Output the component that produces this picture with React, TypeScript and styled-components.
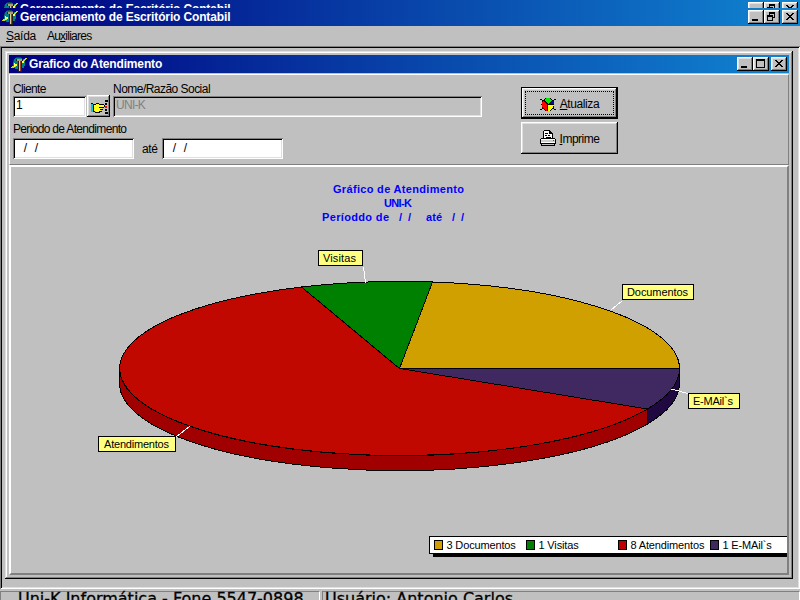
import React from "react";
import styled, { createGlobalStyle, css } from "styled-components";

const Global = createGlobalStyle`
  * { box-sizing: border-box; }
  body { margin: 0; background: #c0c0c0; font: 11px/13px "Liberation Sans", Arial, sans-serif; color: #000; }
  svg { display: block; flex: none; }
`;

const raised = css`
  box-shadow: inset -1px -1px #000, inset 1px 1px #fff, inset -2px -2px #808080, inset 2px 2px #dfdfdf;
`;

const Screen = styled.div`
  width: 800px;
  height: 600px;
  overflow: hidden;
  display: flex;
  flex-direction: column;
  background: #c0c0c0;
`;

const Clip = styled.div`
  height: 8px;
  flex: none;
  overflow: hidden;
`;

const TitleBar = styled.div`
  height: 18px;
  flex: none;
  display: flex;
  align-items: center;
  padding: 0 2px;
  background: linear-gradient(90deg, #000080, #1084d0);
`;

const TitleText = styled.span<{ $spacing: number }>`
  flex: 1;
  padding-left: 2px;
  color: #fff;
  font-size: 12px;
  font-weight: bold;
  letter-spacing: ${(p) => p.$spacing}px;
  white-space: nowrap;
`;

const Caption = styled.span<{ $gap?: boolean }>`
  ${raised}
  width: 16px;
  height: 14px;
  background: #c0c0c0;
  margin-left: ${(p) => (p.$gap ? 2 : 0)}px;
`;

const MenuBar = styled.div`
  height: 20px;
  flex: none;
  display: flex;
  gap: 11px;
  padding: 4px 6px;
  font-size: 12px;
`;

const Text = styled.span<{ $spacing?: number }>`
  letter-spacing: ${(p) => p.$spacing ?? 0}px;
  white-space: pre;
`;

const Mdi = styled.div`
  height: 543px;
  flex: none;
  padding: 5px 7px 10px 5px;
  box-shadow: inset 1px 1px #808080, inset -1px -1px #fff, inset 2px 2px #000, inset -2px -2px #dfdfdf;
`;

const Child = styled.div`
  height: 528px;
  padding: 4px;
  display: flex;
  flex-direction: column;
  box-shadow: inset -1px -1px #000, inset 1px 1px #dfdfdf, inset -2px -2px #808080, inset 2px 2px #fff;
`;

const FormPanel = styled.div`
  height: 91px;
  margin-top: 1px;
  flex: none;
  display: flex;
  border: 1px solid;
  border-color: #fff #808080 #808080 #fff;
`;

const Fields = styled.div`
  width: 511px;
  padding: 8px 0 0 3px;
  font-size: 12px;
`;

const FieldLabels = styled.div`
  display: grid;
  grid-template-columns: 100px 1fr;
  height: 13px;
`;

const FieldRow = styled.div<{ $top?: number }>`
  display: flex;
  align-items: flex-start;
  height: 22px;
  margin-bottom: 5px;
  padding-top: ${(p) => p.$top ?? 0}px;
`;

const Field = styled.div<{ $w: number; $disabled?: boolean; $date?: boolean }>`
  width: ${(p) => p.$w}px;
  height: 21px;
  padding: ${(p) => (p.$date ? 4 : 3)}px 3px 0;
  word-spacing: ${(p) => (p.$date ? 0.5 : 0)}px;
  white-space: pre;
  background: ${(p) => (p.$disabled ? "#c0c0c0" : "#fff")};
  color: ${(p) => (p.$disabled ? "#808080" : "#000")};
  box-shadow: inset 1px 1px #808080, inset -1px -1px #fff, inset 2px 2px #000, inset -2px -2px #dfdfdf;
`;

const PickButton = styled.button`
  ${raised}
  width: 23px;
  height: 22px;
  margin: -1px 3px 0 1px;
  padding: 2px 0 0 4px;
  border: 0;
  background: #c0c0c0;
`;

const Until = styled.span`
  width: 28px;
  padding: 5px 0 0 8px;
  letter-spacing: -0.4px;
`;

const Actions = styled.div`
  display: flex;
  flex-direction: column;
  gap: 3px;
  padding-top: 12px;
`;

const Action = styled.button<{ $focused?: boolean }>`
  position: relative;
  display: flex;
  align-items: center;
  justify-content: center;
  gap: 3px;
  width: 97px;
  height: 32px;
  padding: 2px 0 0;
  border: 0;
  color: #000;
  background: #c0c0c0;
  font: 12px/13px "Liberation Sans", Arial, sans-serif;
  ${raised}
  ${(p) =>
    p.$focused &&
    css`
      border: 1px solid #000;
      &::after {
        content: "";
        position: absolute;
        inset: 3px;
        border: 1px dotted #000;
      }
    `}
`;

const ChartPanel = styled.div`
  position: relative;
  height: 410px;
  flex: none;
  overflow: hidden;
  border: 2px solid;
  border-color: #fff #808080 #808080 #fff;
`;

const Legend = styled.div`
  position: absolute;
  left: 418px;
  top: 369px;
  width: 368px;
  height: 18px;
  padding: 3px 4px;
  display: grid;
  grid-template-columns: repeat(4, 92px);
  border: 1px solid #000;
  background: #fff;
  box-shadow: 4px 3px #000;
`;

const LegendItem = styled.div`
  display: flex;
  align-items: flex-start;
  gap: 3.5px;
  line-height: 11px;
  letter-spacing: -0.15px;
  white-space: pre;
`;

const Swatch = styled.i<{ $c: string }>`
  width: 9px;
  height: 10px;
  border: 1px solid #000;
  background: ${(p) => p.$c};
`;

const Status = styled.div`
  flex: none;
  height: 30px;
  padding-top: 2px;
  display: grid;
  grid-template-columns: 320px 1fr;
  gap: 2px;
`;

const StatusCell = styled.div<{ $pad: number }>`
  padding: 0 0 0 ${(p) => p.$pad}px;
  border: 1px solid;
  border-color: #808080 #fff #fff #808080;
  font: 16px/14px "DejaVu Sans", Verdana, sans-serif;
  white-space: nowrap;
  -webkit-text-stroke: 0.3px #000;
`;

const AppIcon = () => (
  <svg width="16" height="18" viewBox="0 0 16 18" shapeRendering="crispEdges">
    <path d="M4 3h7v1h2v2h1v5h-1v2h-2v1H4v-1H3v-2H2V6h1V4h1z" fill="#008080" />
    <path d="M5 2h5v1H5zM2 5h1v2H2z" fill="#004848" />
    <path d="M14 3h2v1h-1v1h-1v1h-2V5h1V4h1zM0 12h1v-1h2v-1h2v2H3v1H0z" fill="#c8d820" />
    <path d="M3 8h1v1h2v2H4v1H3z" fill="#ffff40" />
    <path d="M5 4h7v2h-1v11H7V6H5z" fill="#202020" />
    <path d="M6 4h5v2H6z" fill="#b09878" />
    <path d="M8 6h1v10H8z" fill="#e8c898" />
    <path d="M9 6h1v10H9z" fill="#984020" />
    <path d="M11 6h2v2h-2z" fill="#ffff40" />
  </svg>
);

const Glyph = ({ kind }: { kind: "min" | "max" | "restore" | "close" }) => (
  <svg width="16" height="14" viewBox="0 0 16 14" shapeRendering="crispEdges">
    {kind === "min" && <path d="M4 9h6v2H4z" />}
    {kind === "max" && <path fillRule="evenodd" d="M3 2h9v9H3zM4 4v6h7V4z" />}
    {kind === "restore" && (
      <path fillRule="evenodd" d="M5 2h6v6H9V7h1V4H6v1H5zM3 5h6v6H3zM4 7v3h4V7z" />
    )}
    {kind === "close" && (
      <path d="M4 3h2v1h1v1h2V4h1V3h2v1h-1v1h-1v1H9v1h1v1h1v1h1v1h-2V9H9V8H7v1H6v1H4V9h1V8h1V7h1V6H6V5H5V4H4z" />
    )}
  </svg>
);

const Bar = ({ text, middle, spacing }: { text: string; middle: "max" | "restore"; spacing: number }) => (
  <TitleBar>
    <AppIcon />
    <TitleText $spacing={spacing}>{text}</TitleText>
    <Caption><Glyph kind="min" /></Caption>
    <Caption><Glyph kind={middle} /></Caption>
    <Caption $gap><Glyph kind="close" /></Caption>
  </TitleBar>
);

const HandIcon = () => (
  <svg width="17" height="14" viewBox="0 0 17 14" shapeRendering="crispEdges">
    <path d="M0 4h2v8H0z" fill="#00c8d8" />
    <path d="M0 3h2v1H0zM2 4h1v8H2z" />
    <path d="M3 5h2V4h4v1h4v2h-2v3h-1v1H9v1H5v-1H3z" fill="#ffff20" />
    <path d="M5 3h3v1H5zM8 4h1v1H8zM9 4h4v1H9zM13 5h1v2h-1zM8 7h5v1H8zM9 9h3v1H9zM8 11h3v1H8zM4 12h5v1H4zM3 4h2v1H3zM3 11h1v1H3z" />
    <path d="M14 0h3v2h-3zM14 3h2v2h-2zM14 9h2v2h-2zM14 12h3v2h-3z" />
    <path d="M14 6h2v2h-2z" fill="#f00" />
  </svg>
);

const PieIcon = () => (
  <svg width="17" height="15" viewBox="0 0 17 15" shapeRendering="crispEdges">
    <circle cx="8" cy="7.5" r="6.5" fill="#000" />
    <path d="M8 7L4 3Q8-1 12 3z" fill="#00e800" />
    <path d="M7 7L3 4Q0 8 3 11L7 14z" fill="#f00" />
    <path d="M9 7l4-4q2 2 1 4z" fill="#0000e0" />
    <path d="M8 8h6q-1 5-6 6z" fill="#ff0" />
    <path d="M0 2h2v1H0zM2 3h1v1H2zM14 2h2v1h-2zM13 3h1v1h-1zM0 12h2v1H0zM2 11h1v1H2zM13 11h1v1h-1zM14 12h2v1h-2z" />
  </svg>
);

const PrinterIcon = () => (
  <svg width="17" height="18" viewBox="0 0 17 18" shapeRendering="crispEdges">
    <path d="M4 0h6v1h1v1h1v1h1v6H3V1h1z" />
    <path d="M4 1h5v3h3v4H4z" fill="#fff" />
    <path d="M5 3h3v1H5zM5 5h2v1H5zM8 5h2v1H8zM6 7h5v1H6zM1 8h14v1h1v5h-1v2H1v-2H0V9h1z" />
    <path d="M1 9h14v1H1zM1 12h14v1H1z" fill="#fff" />
    <path d="M1 10h14v2H1z" fill="#c8d0c8" />
    <path d="M2 14h12v1H2z" fill="#c0c0c0" />
    <path d="M13 10h1v1h-1z" fill="#f00" />
  </svg>
);

const marks = [
  { x: 318, y: 250, w: 45, text: "Visitas", tx: 323, tw: 33 },
  { x: 622, y: 284, w: 72, text: "Documentos", tx: 627, tw: 61 },
  { x: 688, y: 393, w: 52, text: "E-MAil`s", tx: 693, tw: 40 },
  { x: 98, y: 436, w: 78, text: "Atendimentos", tx: 104, tw: 65 },
];

const titles = [
  { text: "Gráfico de Atendimento", x: 333, y: 193, w: 131 },
  { text: "UNI-K", x: 384, y: 207, w: 28 },
  { text: "Períoddo de", x: 322, y: 221, w: 67 },
  { text: "/ /", x: 399, y: 221, w: 12 },
  { text: "até", x: 426, y: 221, w: 16 },
  { text: "/ /", x: 452, y: 221, w: 12 },
];

const Pie = () => (
  <svg width="776" height="406" viewBox="11 167 776 406">
    <g stroke="#000" strokeWidth="1" strokeLinejoin="round" shapeRendering="crispEdges">
      <path d="M119.500 368.500A280 87 0 0 0 647.500 409V424A280 87 0 0 1 119.500 384.500z" fill="#a00000" />
      <path d="M679.500 368.500V384.500A280 87 0 0 1 647.500 424V409A280 87 0 0 0 679.500 368.500z" fill="#200840" />
      <path d="M399.500 368.500H679.500A280 87 0 0 0 432.500 282z" fill="#d0a000" />
      <path d="M399.500 368.500L432.500 282A280 87 0 0 0 301.500 287z" fill="#008000" />
      <path d="M399.500 368.500L301.500 287A280 87 0 1 0 647.500 409z" fill="#c00800" />
      <path d="M399.500 368.500L647.500 409A280 87 0 0 0 679.500 368.500z" fill="#402860" />
    </g>
    <path d="M363.500 267L365.500 283M622 301L611 310M688 393.500L671 389M176 437L190 426" stroke="#fff" fill="none" shapeRendering="crispEdges" />
    {marks.map((m) => (
      <g key={m.text}>
        <rect x={m.x + 0.5} y={m.y + 0.5} width={m.w - 1} height="15" fill="#ffff80" stroke="#000" />
        <text x={m.tx} y={m.y + 12} textLength={m.tw} fontSize="11">{m.text}</text>
      </g>
    ))}
    {titles.map((t) => (
      <text key={`${t.x}-${t.y}`} x={t.x} y={t.y} textLength={t.w} fontSize="11" fontWeight="bold" fill="#00f">{t.text}</text>
    ))}
  </svg>
);

const legend = [
  ["#d0a000", "3 Documentos"],
  ["#008000", "1 Visitas"],
  ["#c00000", "8 Atendimentos"],
  ["#402860", "1 E-MAil`s"],
];

export default function App() {
  return (
    <Screen>
      <Global />
      <Clip><Bar text="Gerenciamento de Escritório Contabil" middle="restore" spacing={-0.14} /></Clip>
      <Bar text="Gerenciamento de Escritório Contabil" middle="restore" spacing={-0.14} />
      <MenuBar>
        <Text $spacing={-0.3}><u>S</u>aída</Text>
        <Text $spacing={-0.75}>Au<u>x</u>iliares</Text>
      </MenuBar>
      <Mdi>
        <Child>
          <Bar text="Grafico do Atendimento" middle="max" spacing={-0.14} />
          <FormPanel>
            <Fields>
              <FieldLabels>
                <Text $spacing={-0.65}>Cliente</Text>
                <Text $spacing={-0.53}>Nome/Razão Social</Text>
              </FieldLabels>
              <FieldRow>
                <Field $w={73}>1</Field>
                <PickButton><HandIcon /></PickButton>
                <Field $w={369} $disabled><Text $spacing={-0.7}>UNI-K</Text></Field>
              </FieldRow>
              <Text $spacing={-0.67}>Periodo de Atendimento</Text>
              <FieldRow $top={2}>
                <Field $w={121} $date>{"  /  /"}</Field>
                <Until>até</Until>
                <Field $w={121} $date>{"  /  /"}</Field>
              </FieldRow>
            </Fields>
            <Actions>
              <Action $focused><PieIcon /><Text $spacing={-0.4}><u>A</u>tualiza</Text></Action>
              <Action><PrinterIcon /><Text $spacing={-0.5}><u>I</u>mprime</Text></Action>
            </Actions>
          </FormPanel>
          <ChartPanel>
            <Pie />
            <Legend>
              {legend.map(([color, label]) => (
                <LegendItem key={label}><Swatch $c={color} />{label}</LegendItem>
              ))}
            </Legend>
          </ChartPanel>
        </Child>
      </Mdi>
      <Status>
        <StatusCell $pad={17}>Uni-K Informática - Fone 5547-0898</StatusCell>
        <StatusCell $pad={2}>Usuário: Antonio Carlos</StatusCell>
      </Status>
    </Screen>
  );
}
